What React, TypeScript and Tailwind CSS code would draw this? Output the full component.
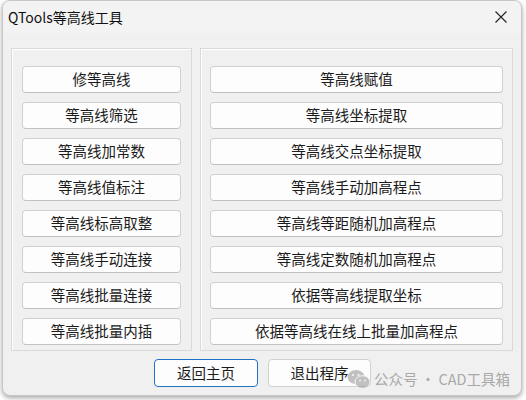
import React from 'react';

const leftItems = ['修等高线', '等高线筛选', '等高线加常数', '等高线值标注', '等高线标高取整', '等高线手动连接', '等高线批量连接', '等高线批量内插'];
const rightItems = ['等高线赋值', '等高线坐标提取', '等高线交点坐标提取', '等高线手动加高程点', '等高线等距随机加高程点', '等高线定数随机加高程点', '依据等高线提取坐标', '依据等高线在线上批量加高程点'];

const font = { fontFamily: '"Segoe UI", "Noto Sans CJK SC", "Noto Sans", sans-serif' };

function Btn({ label }: { label: string }) {
  return (
    <button className="h-[27px] w-full rounded-[4px] border border-[#d0d0d0] border-b-[#c2c2c2] bg-[#fdfdfd] text-[14.5px] leading-none text-[#1b1b1b]">
      {label}
    </button>
  );
}

function WeChatIcon() {
  return (
    <svg width="24" height="20" viewBox="0 0 24 20" className="opacity-60">
      <ellipse cx="9" cy="8" rx="8.5" ry="7" fill="#9a9a9a" />
      <ellipse cx="15.5" cy="13" rx="7.5" ry="6.3" fill="#9a9a9a" stroke="#f0f0f0" strokeWidth="1" />
      <circle cx="6" cy="6" r="1.1" fill="#f0f0f0" />
      <circle cx="11.5" cy="6" r="1.1" fill="#f0f0f0" />
      <circle cx="13" cy="11.5" r="0.9" fill="#f0f0f0" />
      <circle cx="18" cy="11.5" r="0.9" fill="#f0f0f0" />
    </svg>
  );
}

export default function App() {
  return (
    <div className="h-[400px] w-[526px] overflow-hidden bg-white" style={font}>
      <div className="relative ml-[2px] flex h-[396px] w-[520px] flex-col overflow-hidden rounded-[8px] border border-[#c6c6c6] bg-[#f0f0f0] shadow-[0_2px_5px_rgba(0,0,0,0.35)]">
        {/* 标题栏 */}
        <div className="flex h-[32px] items-center justify-between bg-[#f3f3f3] pl-[5px] pr-[14px]">
          <span className="text-[14px] text-[#111]">QTools等高线工具</span>
          <svg width="12" height="12" viewBox="0 0 12 12">
            <path d="M0.5 0.5 L11.5 11.5 M11.5 0.5 L0.5 11.5" stroke="#222" strokeWidth="1.1" />
          </svg>
        </div>

        {/* 两个分组框 */}
        <div className="mt-[15px] flex gap-[8px] px-[8px]">
          <div className="flex h-[303px] w-[181px] flex-col gap-[9px] border border-[#d9d9d9] px-[10px] pt-[17px] shadow-[inset_1px_1px_0_#fff]">
            {leftItems.map((t) => (
              <Btn key={t} label={t} />
            ))}
          </div>
          <div className="flex h-[303px] w-[313px] flex-col gap-[9px] border border-[#d9d9d9] px-[9px] pt-[17px] shadow-[inset_1px_1px_0_#fff]">
            {rightItems.map((t) => (
              <Btn key={t} label={t} />
            ))}
          </div>
        </div>

        {/* 底部按钮 */}
        <div className="mt-[8px] flex justify-center gap-[10px] pl-[1px]">
          <button className="h-[28px] w-[104px] rounded-[4px] border-[1.5px] border-[#1f72c4] bg-[#fdfdfd] text-[14.5px] text-[#1b1b1b]">
            返回主页
          </button>
          <button className="h-[28px] w-[103px] rounded-[4px] border border-[#d0d0d0] bg-[#fdfdfd] text-[14.5px] text-[#1b1b1b]">
            退出程序
          </button>
        </div>

        {/* 水印 */}
        <div className="absolute left-[344px] top-[367px] flex items-center gap-[3px] whitespace-nowrap text-[14.5px] text-[#a8a8a8]">
          <WeChatIcon />
          <span>公众号 · CAD工具箱</span>
        </div>
      </div>
    </div>
  );
}
